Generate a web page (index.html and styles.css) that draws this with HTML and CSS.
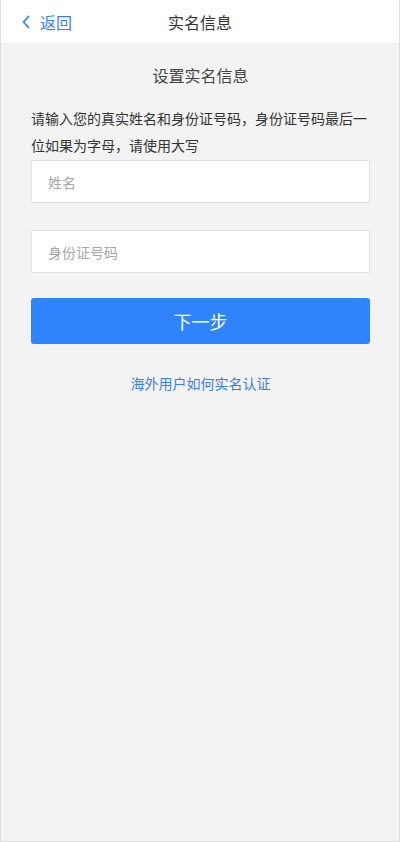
FILE: index.html
```html
<!DOCTYPE html>
<html lang="zh-CN">
<head>
<meta charset="utf-8">
<title>实名信息</title>
<link rel="stylesheet" href="styles.css">
</head>
<body>
<div class="page">
  <header class="topbar">
    <a class="back" href="#">
      <svg class="chev" width="10" height="14" viewBox="0 0 10 14"><path d="M7.5 1.5 L2.5 7 L7.5 12.5" fill="none" stroke="#3b7ff2" stroke-width="1.8" stroke-linecap="round" stroke-linejoin="round"/></svg>
      <span>返回</span>
    </a>
    <h1 class="title">实名信息</h1>
  </header>
  <main class="content">
    <h2 class="subtitle">设置实名信息</h2>
    <p class="desc">请输入您的真实姓名和身份证号码，身份证号码最后一位如果为字母，请使用大写</p>
    <input class="field" type="text" placeholder="姓名">
    <input class="field field-id" type="text" placeholder="身份证号码">
    <button class="next" type="button">下一步</button>
    <a class="help" href="#">海外用户如何实名认证</a>
  </main>
</div>
</body>
</html>
```
FILE: styles.css
```css
html, body {
  margin: 0;
  padding: 0;
}
body {
  font-family: "Noto Sans CJK SC", "Noto Sans", "Liberation Sans", sans-serif;
  background: #ffffff;
}
.page {
  width: 400px;
  height: 842px;
  box-sizing: border-box;
  border: 1px solid #dedede;
  border-top: none;
  background: #f3f3f3;
  display: flex;
  flex-direction: column;
}
.topbar {
  position: relative;
  height: 43px;
  background: #ffffff;
  display: flex;
  align-items: center;
  justify-content: center;
}
.back {
  position: absolute;
  left: 20px;
  top: 0;
  height: 43px;
  display: flex;
  align-items: center;
  gap: 9px;
  color: #3b7ff2;
  text-decoration: none;
  font-size: 16px;
}
.chev {
  display: block;
}
.title {
  margin: 0;
  font-size: 16px;
  font-weight: normal;
  color: #333333;
}
.content {
  padding: 0 29px 0 30px;
  display: flex;
  flex-direction: column;
}
.subtitle {
  margin: 22px 0 0;
  font-size: 16px;
  line-height: 20px;
  font-weight: normal;
  color: #444444;
  text-align: center;
}
.desc {
  margin: 20px 0 0;
  font-size: 14px;
  line-height: 27px;
  color: #333333;
}
.field {
  display: block;
  box-sizing: border-box;
  width: 100%;
  height: 43px;
  margin: 1px 0 0;
  padding: 0 16px;
  border: 1px solid #e2e2e2;
  border-radius: 1px;
  background: #ffffff;
  font-family: inherit;
  font-size: 14px;
  color: #333333;
  outline: none;
}
.field::placeholder {
  color: #a6a6a6;
}
.field-id {
  margin-top: 27px;
}
.next {
  margin-top: 25px;
  height: 46px;
  border: none;
  border-radius: 3px;
  background: #2f84fd;
  color: #ffffff;
  font-family: inherit;
  font-size: 18px;
  cursor: pointer;
}
.help {
  margin-top: 29px;
  align-self: center;
  font-size: 14px;
  line-height: 20px;
  color: #3b7ee6;
  text-decoration: none;
}
```
